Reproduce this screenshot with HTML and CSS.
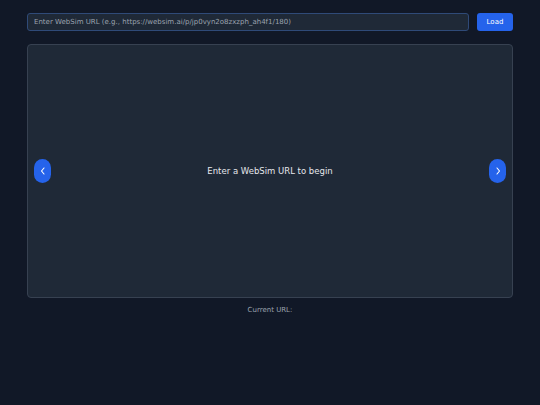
FILE: index.html
```html
<!DOCTYPE html>
<html>
<head>
<meta charset="utf-8">
<link rel="stylesheet" href="styles.css">
</head>
<body>
<div class="app">
  <div class="bar">
    <input class="url" type="text" placeholder="Enter WebSim URL (e.g., https://websim.ai/p/jp0vyn2o8zxzph_ah4f1/180)">
    <button class="load">Load</button>
  </div>
  <div class="frame">
    <button class="nav">
      <svg width="6" height="8" viewBox="0 0 6 8"><path d="M4 1 L1.5 4 L4 7" fill="none" stroke="#fff" stroke-width="1.1" stroke-linecap="round" stroke-linejoin="round"/></svg>
    </button>
    <div class="msg">Enter a WebSim URL to begin</div>
    <button class="nav">
      <svg width="6" height="8" viewBox="0 0 6 8"><path d="M2 1 L4.5 4 L2 7" fill="none" stroke="#fff" stroke-width="1.1" stroke-linecap="round" stroke-linejoin="round"/></svg>
    </button>
  </div>
  <div class="current">Current URL: </div>
</div>
</body>
</html>
```
FILE: styles.css
```css
html, body {
  margin: 0;
  padding: 0;
  background: #111827;
  height: 100%;
}
body {
  font-family: "DejaVu Sans", sans-serif;
}
.app {
  width: 486px;
  margin: 0 auto;
  padding-top: 13px;
  display: flex;
  flex-direction: column;
}
.bar {
  display: flex;
  gap: 8px;
  height: 18px;
}
.url {
  flex: 1;
  box-sizing: border-box;
  height: 18px;
  margin: 0;
  background: #1f2937;
  border: 1px solid #2f4a78;
  border-radius: 3px;
  padding: 0 6px;
  color: #d1d5db;
  font-family: "DejaVu Sans", sans-serif;
  font-size: 7px;
  outline: none;
}
.url::placeholder {
  color: #9ca3af;
}
.load {
  width: 36px;
  height: 18px;
  margin: 0;
  padding: 0;
  background: #2563eb;
  color: #fff;
  border: none;
  border-radius: 3px;
  font-family: "DejaVu Sans", sans-serif;
  font-size: 7px;
}
.frame {
  margin-top: 13px;
  height: 254px;
  box-sizing: border-box;
  background: #1f2937;
  border: 1px solid #374151;
  border-radius: 4px;
  display: flex;
  align-items: center;
  justify-content: space-between;
  padding: 0 6px;
}
.nav {
  width: 17px;
  height: 24px;
  margin: 0;
  padding: 0;
  border: none;
  border-radius: 9px;
  background: #2563eb;
  display: flex;
  align-items: center;
  justify-content: center;
}
.msg {
  color: #e5e7eb;
  font-size: 8.5px;
}
.current {
  margin-top: 8px;
  text-align: center;
  color: #9ca3af;
  font-size: 7px;
}
```
